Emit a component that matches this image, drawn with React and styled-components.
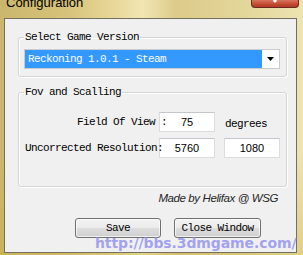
import React from 'react';
import styled, { createGlobalStyle } from 'styled-components';

const GlobalStyle = createGlobalStyle`
  html, body {
    margin: 0;
    padding: 0;
    background: #ffffff;
  }
  #root {
    width: 303px;
    height: 255px;
  }
`;

const mono = `"Liberation Mono", "DejaVu Sans Mono", monospace`;

const Window = styled.div`
  position: relative;
  width: 303px;
  height: 255px;
  display: flex;
  flex-direction: column;
  overflow: hidden;
  background:
    linear-gradient(180deg, rgba(255, 255, 255, 0) 60%, rgba(200, 170, 60, 0.35) 100%),
    linear-gradient(90deg, #cbb76c 0%, #d6c27a 22%, #eadb9e 40%, #f3e6b4 47%, #dccb8a 58%, #e3d699 80%, #ede4b2 100%);
`;

const TitleBar = styled.div`
  height: 18px;
  flex-shrink: 0;
  display: flex;
  justify-content: space-between;
  align-items: flex-start;
  padding: 0 4px 0 6px;
  overflow: hidden;
`;

const Title = styled.span`
  margin-top: -4px;
  font-family: "Liberation Sans", Arial, sans-serif;
  font-size: 13px;
  line-height: 13px;
  color: #000;
`;

const CloseButton = styled.div`
  width: 46px;
  height: 7px;
  border: 1px solid #6e2a20;
  border-top: none;
  border-radius: 0 0 4px 4px;
  background: linear-gradient(180deg, #d8745c 0%, #c24a33 60%, #b23a26 100%);
  display: flex;
  justify-content: center;
  overflow: hidden;
`;

const Client = styled.div`
  flex: 1;
  margin: 0 6px 2px 4px;
  border: 1px solid #727060;
  background: #f0f0f0;
  padding: 12px 9px 0 13px;
  display: flex;
  flex-direction: column;
`;

const Group = styled.fieldset`
  margin: ${p => (p.$gap ? `${p.$gap}px 0 0 0` : '0')};
  padding: ${p => p.$pad};
  border: 1px solid #d3d6d9;
  border-radius: 3px;
  box-shadow: inset 1px 1px 0 #ffffff, 1px 1px 0 #ffffff;
  min-width: 0;
`;

const Legend = styled.legend`
  padding: 0 1px;
  margin: 0;
  font-family: ${mono};
  font-size: 11px;
  letter-spacing: -0.6px;
  line-height: 12px;
  color: #000;
`;

const Combo = styled.div`
  height: 20px;
  box-sizing: border-box;
  display: flex;
  border: 1px solid #c9cbce;
  background: #fff;
`;

const ComboValue = styled.div`
  flex: 1;
  background: #3399ff;
  color: #fff;
  padding-left: 3px;
  font-family: ${mono};
  font-size: 11px;
  letter-spacing: -0.6px;
  line-height: 18px;
  white-space: nowrap;
`;

const ComboArrow = styled.div`
  width: 17px;
  display: flex;
  align-items: center;
  justify-content: center;
`;

const Row = styled.div`
  display: flex;
  align-items: center;
  height: 20px;
  & + & {
    margin-top: 6px;
  }
`;

const FieldLabel = styled.span`
  position: relative;
  z-index: 1;
  flex-shrink: 0;
  width: 135px;
  box-sizing: border-box;
  padding-left: ${p => p.$indent || 1}px;
  white-space: nowrap;
  font-family: ${mono};
  font-size: 11px;
  letter-spacing: -0.6px;
  color: #000;
`;

const NumberBox = styled.div`
  width: 56px;
  height: 20px;
  box-sizing: border-box;
  flex-shrink: 0;
  margin-left: ${p => p.$gap || 0}px;
  border: 1px solid #dadcdf;
  border-top-color: #c3c6ca;
  background: #fff;
  text-align: center;
  font-family: "Liberation Sans", Arial, sans-serif;
  font-size: 11px;
  line-height: 18px;
  color: #000;
`;

const Unit = styled.span`
  margin: 4px 0 0 10px;
  font-family: ${mono};
  font-size: 11px;
  letter-spacing: -0.6px;
  color: #000;
`;

const Credit = styled.div`
  margin-top: 4px;
  padding-right: 9px;
  text-align: right;
  font-family: "Liberation Sans", Arial, sans-serif;
  font-style: italic;
  font-size: 11.5px;
  letter-spacing: -0.4px;
  line-height: 14px;
  color: #262626;
`;

const ButtonRow = styled.div`
  display: flex;
  gap: 13px;
  margin-top: 13px;
  padding-left: 57px;
`;

const Button = styled.button`
  width: ${p => p.$w}px;
  height: 20px;
  padding: 0;
  border: 1px solid #707070;
  border-radius: 3px;
  background: linear-gradient(180deg, #f3f3f3 0%, #ebebeb 48%, #dddddd 52%, #cfcfcf 100%);
  box-shadow: inset 0 0 0 1px rgba(255, 255, 255, 0.7);
  font-family: ${mono};
  font-size: 11px;
  letter-spacing: -0.6px;
  color: #000;
`;

const Watermark = styled.div`
  position: absolute;
  left: 95px;
  top: 236px;
  font-family: "DejaVu Sans", Verdana, sans-serif;
  font-weight: bold;
  font-size: 14px;
  line-height: 14px;
  letter-spacing: -0.1px;
  color: rgba(140, 140, 240, 0.78);
  white-space: nowrap;
  pointer-events: none;
`;

export default function App() {
  return (
    <>
      <GlobalStyle />
      <Window>
        <TitleBar>
          <Title>Configuration</Title>
          <CloseButton>
            <svg width="14" height="7" viewBox="0 0 14 7">
              <path d="M3 -4 L8 2 M11 -4 L6 2" stroke="#fff" strokeWidth="2.2" fill="none" />
            </svg>
          </CloseButton>
        </TitleBar>
        <Client>
          <Group $pad="6px 6px 7px 5px">
            <Legend>Select Game Version</Legend>
            <Combo>
              <ComboValue>Reckoning 1.0.1 - Steam</ComboValue>
              <ComboArrow>
                <svg width="7" height="4" viewBox="0 0 7 4">
                  <path d="M0 0 H7 L3.5 4 Z" fill="#000" />
                </svg>
              </ComboArrow>
            </Combo>
          </Group>
          <Group $gap={9} $pad="14px 6px 28px 5px">
            <Legend>Fov and Scalling</Legend>
            <Row>
              <FieldLabel $indent={53}>Field Of View :</FieldLabel>
              <NumberBox>75</NumberBox>
              <Unit>degrees</Unit>
            </Row>
            <Row>
              <FieldLabel>Uncorrected Resolution:</FieldLabel>
              <NumberBox>5760</NumberBox>
              <NumberBox $gap={9}>1080</NumberBox>
            </Row>
          </Group>
          <Credit>Made by Helifax @ WSG</Credit>
          <ButtonRow>
            <Button $w={86}>Save</Button>
            <Button $w={87}>Close Window</Button>
          </ButtonRow>
        </Client>
        <Watermark>http://bbs.3dmgame.com/</Watermark>
      </Window>
    </>
  );
}
